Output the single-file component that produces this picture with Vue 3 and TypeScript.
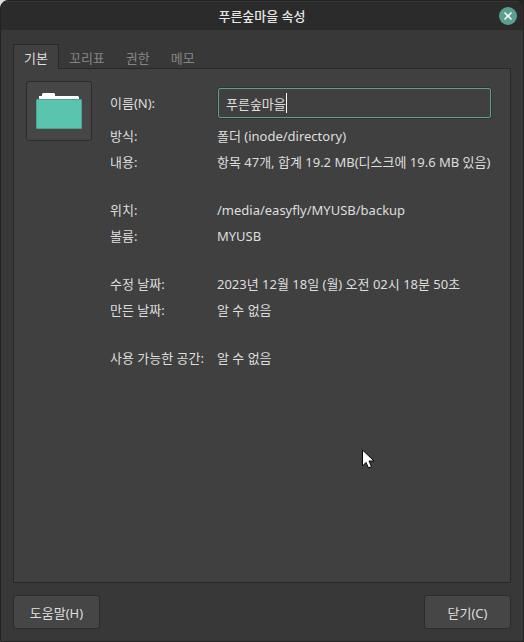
<script setup lang="ts">
import { onMounted, ref, watch } from 'vue'

interface Detail {
  label: string
  value: string
  startsGroup?: boolean
}

const tabs = ['기본', '꼬리표', '권한', '메모']
const activeTab = ref('기본')
const name = ref('푸른숲마을')
const nameInput = ref<HTMLInputElement | null>(null)
const caretOffset = ref(0)

const details: Detail[] = [
  { label: '방식:', value: '폴더 (inode/directory)' },
  { label: '내용:', value: '항목 47개, 합계 19.2 MB(디스크에 19.6 MB 있음)' },
  { label: '위치:', value: '/media/easyfly/MYUSB/backup', startsGroup: true },
  { label: '볼륨:', value: 'MYUSB' },
  { label: '수정 날짜:', value: '2023년 12월 18일 (월) 오전 02시 18분 50초', startsGroup: true },
  { label: '만든 날짜:', value: '알 수 없음' },
  { label: '사용 가능한 공간:', value: '알 수 없음', startsGroup: true },
]

// The caret is drawn steadily at the insertion point instead of blinking.
function placeCaret() {
  const input = nameInput.value
  const context = document.createElement('canvas').getContext('2d')
  if (!input || !context) return
  context.font = getComputedStyle(input).font
  const before = name.value.slice(0, input.selectionStart ?? name.value.length)
  caretOffset.value = Math.round(context.measureText(before).width)
}

onMounted(() => {
  const input = nameInput.value
  input?.focus()
  input?.setSelectionRange(name.value.length, name.value.length)
  placeCaret()
})
watch(name, placeCaret, { flush: 'post' })
</script>

<template>
  <div class="desktop">
    <div class="window">
      <header class="titlebar">
        <h1 class="title">푸른숲마을 속성</h1>
        <button class="close" type="button" aria-label="닫기">
          <svg viewBox="0 0 18 18" width="18" height="18">
            <circle cx="9" cy="9" r="9" fill="#5a9f91" />
            <path d="M5.5 5.5l7 7M12.5 5.5l-7 7" stroke="#fff" stroke-width="1.5" fill="none" />
          </svg>
        </button>
      </header>

      <main class="content">
        <div class="tabs" role="tablist">
          <button
            v-for="tab in tabs"
            :key="tab"
            type="button"
            role="tab"
            class="tab"
            :class="{ active: tab === activeTab }"
            :aria-selected="tab === activeTab"
            @click="activeTab = tab"
          >{{ tab }}</button>
        </div>

        <section class="panel">
          <button class="icon-button" type="button" aria-label="폴더">
            <svg viewBox="0 0 46 38" width="46" height="38">
              <path d="M3 8V4h3V2l1-1h11l1 1v2h23l1 1v3z" fill="#fff" />
              <rect x="0.5" y="7.5" width="45" height="29" rx="0.5" fill="#5bc4ae" stroke="#4aa491" />
            </svg>
          </button>
          <div class="details">
            <div class="row name-row">
              <label class="label" for="folder-name">이름(N):</label>
              <div class="field">
                <input
                  id="folder-name"
                  ref="nameInput"
                  v-model="name"
                  class="name"
                  type="text"
                  spellcheck="false"
                  @keyup="placeCaret"
                  @click="placeCaret"
                />
                <span class="caret" :style="{ marginLeft: caretOffset + 'px' }"></span>
              </div>
            </div>
            <div v-for="item in details" :key="item.label" class="row" :class="{ group: item.startsGroup }">
              <span class="label">{{ item.label }}</span>
              <span class="value">{{ item.value }}</span>
            </div>
          </div>
        </section>

        <footer class="actions">
          <button class="action" type="button">도움말(H)</button>
          <button class="action" type="button">닫기(C)</button>
        </footer>
      </main>
    </div>

    <svg class="pointer" viewBox="0 0 13 20" width="13" height="20">
      <path d="M0.5 1v16l3.5-3.5 2.5 5.5 3-1.5L7 12h5z" fill="#fff" stroke="#000" />
    </svg>
  </div>
</template>

<style>
body {
  margin: 0;
}
</style>

<style scoped>
.desktop {
  position: relative;
  display: flex;
  min-height: 100vh;
  background: linear-gradient(90deg, #dfe3df 8px, #252525 8px);
  color: #dedede;
  font-family: "Noto Sans", "Noto Sans CJK KR", sans-serif;
  font-size: 13px;
  line-height: 20px;
}

.window {
  flex: 1;
  display: flex;
  flex-direction: column;
  min-width: 0;
  box-sizing: border-box;
  border: 1px solid #232323;
  border-radius: 8px 8px 0 0;
  background: #383838;
  overflow: hidden;
}

button,
input {
  font: inherit;
  color: inherit;
  box-sizing: border-box;
}

.titlebar {
  display: grid;
  grid-template-columns: 1fr auto 1fr;
  align-items: center;
  height: 29px;
  padding: 0 6px;
  background: #2b2b2b;
  box-shadow: inset 0 1px #363636;
}

.title {
  grid-column: 2;
  margin: 0;
  font-size: 13px;
  font-weight: 500;
  color: #e6e6e6;
}

.close {
  justify-self: end;
  display: flex;
  padding: 0;
  border: 0;
  background: none;
}

.content {
  flex: 1;
  display: flex;
  flex-direction: column;
  padding: 14px 12px 12px;
}

.tabs {
  display: flex;
  margin-bottom: -1px;
}

.tab {
  height: 25px;
  padding: 2px 10px 0;
  border: 1px solid transparent;
  border-bottom: 0;
  background: none;
  color: #858585;
}

.tab + .tab {
  margin-left: -1px;
}

.tab.active {
  position: relative;
  border-color: #282828;
  background: #404040;
  color: #dedede;
}

.panel {
  flex: 1;
  display: flex;
  align-items: flex-start;
  gap: 18px;
  padding: 12px;
  border: 1px solid #282828;
  background: #404040;
}

.icon-button {
  display: flex;
  justify-content: center;
  align-items: center;
  flex: none;
  width: 66px;
  height: 60px;
  padding: 0;
  border: 1px solid #2b2b2b;
  border-radius: 3px;
  background: #464646;
}

.details {
  flex: 1;
  display: grid;
  grid-template-columns: auto 1fr;
  gap: 6px 13px;
  min-width: 0;
  padding: 6px 6px 0 0;
}

.row {
  display: grid;
  grid-column: 1 / -1;
  grid-template-columns: subgrid;
  align-items: center;
}

.row.name-row {
  padding-bottom: 1px;
}

.row.group {
  padding-top: 22px;
}

.label,
.value {
  white-space: nowrap;
}

.field {
  position: relative;
  display: flex;
}

.name {
  width: 100%;
  min-width: 0;
  height: 32px;
  padding: 0 8px;
  border: 1px solid #2e3433;
  border-radius: 3px;
  outline: 1px solid #5a9f91;
  outline-offset: -2px;
  background: #404040;
  caret-color: transparent;
}

.caret {
  position: absolute;
  left: 9px;
  top: 6px;
  width: 1px;
  height: 20px;
  background: #fff;
  pointer-events: none;
}

.actions {
  display: flex;
  justify-content: space-between;
  padding-top: 12px;
}

.action {
  width: 87px;
  height: 34px;
  padding: 1px 0 0;
  border: 1px solid #2b2b2b;
  border-radius: 3px;
  background: #464646;
}

.pointer {
  position: absolute;
  left: 362px;
  top: 449px;
}
</style>
